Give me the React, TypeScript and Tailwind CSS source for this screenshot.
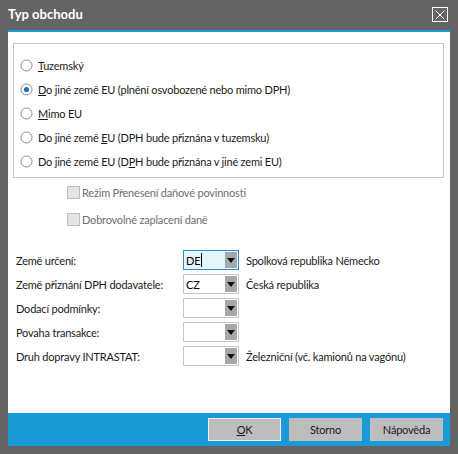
import React from "react";

const font = { fontFamily: 'Lato, "Noto Sans", sans-serif' };
const txt = "text-[11px] tracking-[-0.2px] leading-none";

function Radio({ checked, children }: { checked?: boolean; children: React.ReactNode }) {
  return (
    <div className="flex h-[24px] items-center">
      <svg width="13" height="13" viewBox="0 0 13 13" className="ml-[6px] mr-[5px] shrink-0">
        <circle cx="6.5" cy="6.5" r="5.5" fill="#fff" stroke="#8c8c8c" strokeWidth="1" />
        {checked && <circle cx="6.5" cy="6.5" r="2.6" fill="#1c74c9" />}
      </svg>
      <span className={"whitespace-nowrap text-[#1a1a1a] " + txt}>{children}</span>
    </div>
  );
}

function DisabledCheck({ children }: { children: React.ReactNode }) {
  return (
    <div className="flex h-[27px] items-center">
      <span className="mr-[2px] h-[13px] w-[13px] shrink-0 border border-[#bdbdbd] bg-[#e4e4e4]" />
      <span className={"whitespace-nowrap text-[#6e6e6e] " + txt}>{children}</span>
    </div>
  );
}

function Combo({ value, focused, caret }: { value?: string; focused?: boolean; caret?: boolean }) {
  return (
    <div
      className={
        "flex h-[20px] w-[56px] shrink-0 items-stretch border " +
        (focused ? "border-[#2b8bd1] bg-[#e6f4fc]" : "border-[#c6c6c6] bg-white")
      }
    >
      <div className={"flex flex-1 items-center pl-[2px] text-black " + txt}>
        {value}
        {caret && <span className="ml-[1px] inline-block h-[14px] w-[1px] bg-black" />}
      </div>
      <div className="my-[1px] mr-[1px] flex w-[12px] items-center justify-center bg-[#a8a8a8]">
        <svg width="8" height="5" viewBox="0 0 8 5">
          <path d="M0 0 H8 L4 5 Z" fill="#111" />
        </svg>
      </div>
    </div>
  );
}

function Field({
  label,
  value,
  desc,
  focused,
  caret,
}: {
  label: string;
  value?: string;
  desc?: string;
  focused?: boolean;
  caret?: boolean;
}) {
  return (
    <div className="flex h-[24px] items-center">
      <span className={"w-[167px] shrink-0 whitespace-nowrap text-[#1a1a1a] " + txt}>{label}</span>
      <Combo value={value} focused={focused} caret={caret} />
      {desc && <span className={"ml-[7px] whitespace-nowrap text-[#1a1a1a] " + txt}>{desc}</span>}
    </div>
  );
}

function Btn({ children, focused }: { children: React.ReactNode; focused?: boolean }) {
  return (
    <button
      className={
        "flex h-[23px] w-[73px] items-center justify-center bg-[#bdbdbd] text-[#1a1a1a] " +
        txt +
        (focused ? " border border-[#f2f2f2]" : "")
      }
    >
      {children}
    </button>
  );
}

export default function App() {
  return (
    <div className="flex h-[454px] w-[458px] flex-col bg-[#646464]" style={font}>
      {/* title bar */}
      <div className="flex h-[30px] shrink-0 items-center justify-between pl-[8px] pr-[10px]">
        <span className="text-[13px] font-bold text-white">Typ obchodu</span>
        <div className="mb-[1px] flex h-[15px] w-[16px] items-center justify-center border border-white">
          <svg width="10" height="10" viewBox="0 0 10 10">
            <path d="M0.5 0.5 L9.5 9.5 M9.5 0.5 L0.5 9.5" stroke="#fff" strokeWidth="1" />
          </svg>
        </div>
      </div>

      {/* client area */}
      <div className="mx-[8px] flex flex-1 flex-col border-t-2 border-[#1a9bd8] bg-white">
        <div className="ml-[5px] mr-[6px] mt-[11px] border border-[#c6c6c6] pb-[4px] pt-[9px]">
          <Radio>
            <span className="underline">T</span>uzemský
          </Radio>
          <Radio checked>
            <span className="underline">D</span>o jiné země EU (plnění osvobozené nebo mimo DPH)
          </Radio>
          <Radio>
            <span className="underline">M</span>imo EU
          </Radio>
          <Radio>
            Do jiné země <span className="underline">E</span>U (DPH bude přiznána v tuzemsku)
          </Radio>
          <Radio>
            Do jiné země EU (D<span className="underline">P</span>H bude přiznána v jiné zemi EU)
          </Radio>
        </div>

        <div className="ml-[59px] mt-[1px]">
          <DisabledCheck>Režim Přenesení daňové povinnosti</DisabledCheck>
          <DisabledCheck>Dobrovolné zaplacení daně</DisabledCheck>
        </div>

        <div className="ml-[8px] mt-[15px]">
          <Field label="Země určení:" value="DE" focused caret desc="Spolková republika Německo" />
          <Field label="Země přiznání DPH dodavatele:" value="CZ" desc="Česká republika" />
          <Field label="Dodací podmínky:" />
          <Field label="Povaha transakce:" />
          <Field label="Druh dopravy INTRASTAT:" desc="Železniční (vč. kamionů na vagónu)" />
        </div>
      </div>

      {/* button bar */}
      <div className="mx-[8px] flex h-[33px] shrink-0 items-center justify-end gap-[8px] bg-[#1a9bd8] pr-[7px]">
        <Btn focused>
          <span className="underline">O</span>K
        </Btn>
        <Btn>Storno</Btn>
        <Btn>Nápověda</Btn>
      </div>
      <div className="h-[8px] shrink-0" />
    </div>
  );
}
